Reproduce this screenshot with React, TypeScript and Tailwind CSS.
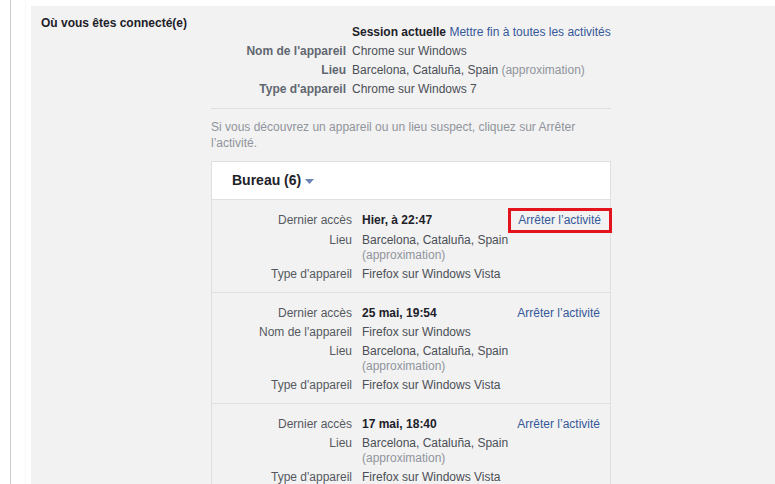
import { clsx } from 'clsx';

type Field = { label: string; value: string; bold?: boolean; approx?: boolean };

const sessions: { fields: Field[]; highlighted?: boolean }[] = [
  {
    highlighted: true,
    fields: [
      { label: 'Dernier accès', value: 'Hier, à 22:47', bold: true },
      { label: 'Lieu', value: 'Barcelona, Cataluña, Spain', approx: true },
      { label: "Type d'appareil", value: 'Firefox sur Windows Vista' },
    ],
  },
  {
    fields: [
      { label: 'Dernier accès', value: '25 mai, 19:54', bold: true },
      { label: "Nom de l'appareil", value: 'Firefox sur Windows' },
      { label: 'Lieu', value: 'Barcelona, Cataluña, Spain', approx: true },
      { label: "Type d'appareil", value: 'Firefox sur Windows Vista' },
    ],
  },
  {
    fields: [
      { label: 'Dernier accès', value: '17 mai, 18:40', bold: true },
      { label: 'Lieu', value: 'Barcelona, Cataluña, Spain', approx: true },
      { label: "Type d'appareil", value: 'Firefox sur Windows Vista' },
    ],
  },
];

const current = [
  { label: "Nom de l'appareil", value: 'Chrome sur Windows' },
  { label: 'Lieu', value: 'Barcelona, Cataluña, Spain', approx: true },
  { label: "Type d'appareil", value: 'Chrome sur Windows 7' },
];

const SessionRow = ({ fields, highlighted }: { fields: Field[]; highlighted?: boolean }) => (
  <div className="flex border-b border-[#dddfe2] pt-[13px] pb-[10px] pr-[10px]">
    <div className="flex shrink-0 flex-col gap-1">
      {fields.map((f, i) => (
        <div key={f.label} className={clsx('flex', highlighted && i === 0 && 'mb-[1px]')}>
          <div className="w-[140px] text-right text-[#55595f]">{f.label}</div>
          <div className="ml-[10px] w-[155px] text-[#4b4f56]">
            {f.bold ? (
              <span className="font-bold text-[#1d2129]">{f.value}</span>
            ) : (
              f.value
            )}
            {f.approx && (
              <>
                <br />
                <span className="text-[#90949c]">(approximation)</span>
              </>
            )}
          </div>
        </div>
      ))}
    </div>
    <div className="flex min-w-0 flex-1 justify-end">
      {highlighted ? (
        <div className="-mt-[5px] -mr-[12px] h-[25px] shrink-0 whitespace-nowrap border-[3px] border-[#e4141e] pl-[7px] pr-[8px] pt-[2px] leading-[15px] text-[#365899]">
          Arrêter l’activité
        </div>
      ) : (
        <span className="whitespace-nowrap text-[#365899]">Arrêter l’activité</span>
      )}
    </div>
  </div>
);

export default function App() {
  return (
    <div
      className="flex h-[484px] w-[775px] overflow-hidden bg-white text-[12px] leading-[15px]"
      style={{ fontFamily: '"Liberation Sans", Arial, sans-serif' }}
    >
      <div className="ml-[10px] w-px shrink-0 bg-[#cccccc]" />
      <div className="ml-[14px] w-px shrink-0 bg-[#f8f8f8]" />
      <div className="mt-[6px] ml-[5px] flex flex-1 bg-[#f2f2f2] px-[10px] pt-[10px]">
        <div className="w-[170px] shrink-0 font-bold text-[#1d2129]">Où vous êtes connecté(e)</div>
        <div className="w-[400px] shrink-0 pt-[7px]">
          <div className="flex flex-col leading-[19px]">
            <div className="flex">
              <div className="w-[135px]" />
              <div className="ml-[6px]">
                <span className="font-bold text-[#1d2129]">Session actuelle</span>{' '}
                <span className="text-[#365899]">Mettre fin à toutes les activités</span>
              </div>
            </div>
            {current.map((f) => (
              <div key={f.label} className="flex">
                <div className="w-[135px] text-right font-bold text-[#616770]">{f.label}</div>
                <div className="ml-[6px] text-[#4b4f56]">
                  {f.value}
                  {f.approx && <span className="text-[#90949c]"> (approximation)</span>}
                </div>
              </div>
            ))}
          </div>
          <div className="mt-[9px] border-t border-[#dddfe2]" />
          <p className="mt-[10px] leading-[16px] text-[#90949c]">
            Si vous découvrez un appareil ou un lieu suspect, cliquez sur Arrêter
            <br />
            l’activité.
          </p>
          <div className="mt-[10px] border-x border-t border-[#dddfe2]">
            <div className="flex h-[38px] items-center border-b border-[#dddfe2] bg-white pl-[20px] text-[14px] font-bold text-[#1d2129]">
              Bureau (6)
              <svg className="ml-[4px] mt-[2px]" width="9" height="6" viewBox="0 0 9 6">
                <path d="M0 0h9L4.5 5z" fill="#6d84b4" />
              </svg>
            </div>
            {sessions.map((s, i) => (
              <SessionRow key={i} fields={s.fields} highlighted={s.highlighted} />
            ))}
          </div>
        </div>
      </div>
    </div>
  );
}
